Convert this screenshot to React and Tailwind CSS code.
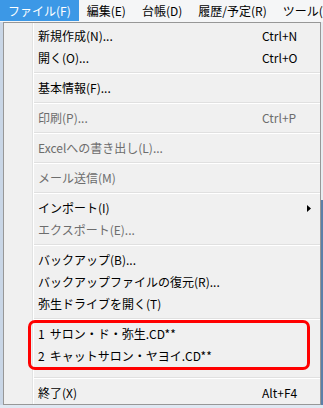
import React from 'react';

const menuBar = ['ファイル(F)', '編集(E)', '台帳(D)', '履歴/予定(R)', 'ツール(T)'];

const items = [
  { label: '新規作成(N)...', shortcut: 'Ctrl+N' },
  { label: '開く(O)...', shortcut: 'Ctrl+O' },
  { sep: true },
  { label: '基本情報(F)...' },
  { sep: true },
  { label: '印刷(P)...', shortcut: 'Ctrl+P', disabled: true },
  { sep: true },
  { label: 'Excelへの書き出し(L)...', disabled: true },
  { sep: true },
  { label: 'メール送信(M)', disabled: true },
  { sep: true },
  { label: 'インポート(I)', submenu: true },
  { label: 'エクスポート(E)...', disabled: true },
  { sep: true },
  { label: 'バックアップ(B)...' },
  { label: 'バックアップファイルの復元(R)...' },
  { label: '弥生ドライブを開く(T)' },
  { sep: true },
  { label: '1 \u2009サロン・ド・弥生.CD**', recent: true },
  { label: '2 \u2009キャットサロン・ヤヨイ.CD**', recent: true },
  { sep: true, tall: true },
  { label: '終了(X)', shortcut: 'Alt+F4' },
];

const Separator = ({ tall }) => (
  <div className={`flex flex-col justify-center ${tall ? 'h-[15px] pt-[6px]' : 'h-[8px]'}`}>
    <div className="h-px bg-[#e0e0e0]" />
    <div className="h-px bg-white" />
  </div>
);

const Item = ({ label, shortcut, disabled, submenu }) => (
  <div className={`flex h-[22px] items-center ${disabled ? 'text-[#6d6d6d]' : 'text-black'}`}>
    <span className="flex-1 pl-[4px] whitespace-nowrap">{label}</span>
    <span className="w-[58px] whitespace-nowrap flex items-center">
      {shortcut}
      {submenu && (
        <svg width="4" height="7" viewBox="0 0 4 7" className="ml-[45px]">
          <path d="M0 0 L4 3.5 L0 7 Z" fill="#000" />
        </svg>
      )}
    </span>
  </div>
);

// offset of the first recent-file row inside the item column
function recentTop(start) {
  let y = 2;
  for (let i = 0; i < start; i++) {
    y += items[i].sep ? 8 : 22;
  }
  return y - 3;
}

export default function App() {
  const recentStart = items.findIndex((i) => i.recent);
  return (
    <div className="w-[323px] h-[408px] overflow-hidden bg-[#dfe8f2] font-['Noto_Sans_CJK_JP','Noto_Sans',sans-serif] text-[12px] leading-none select-none">
      <div className="flex h-[22px] bg-[#f5f6f7] text-black overflow-hidden">
        {menuBar.map((m, i) => (
          <div
            key={m}
            className={`flex items-center px-[8px] whitespace-nowrap ${i === 0 ? 'bg-[#3c98e6] text-white w-[81px] h-[21px]' : ''}`}
          >
            {m}
          </div>
        ))}
      </div>

      <div className="flex h-[383px]">
        <div className="w-[3px] bg-[#c9d6e6]" />
        <div className="w-[318px] border border-[#979797] bg-[#f0f0f0] flex">
          <div className="w-[28px]" />
          <div className="w-px bg-[#e2e3e3]" />
          <div className="w-px bg-white" />
          <div className="flex-1 relative pt-[2px]">
            {items.map((it, idx) =>
              it.sep ? (
                <Separator key={idx} tall={it.tall} />
              ) : (
                <Item key={idx} {...it} />
              )
            )}
            <div
              className="absolute left-[-6px] w-[282px] h-[50px] border-[3px] border-[#ff0000] rounded-[7px] pointer-events-none"
              style={{ top: `${recentTop(recentStart)}px` }}
            />
          </div>
        </div>
        <div className="w-[2px] flex flex-col">
          <div className="h-[178px] bg-[#e8ecf1]" />
          <div className="flex-1 bg-[#5b7fa8]" />
        </div>
      </div>
    </div>
  );
}
